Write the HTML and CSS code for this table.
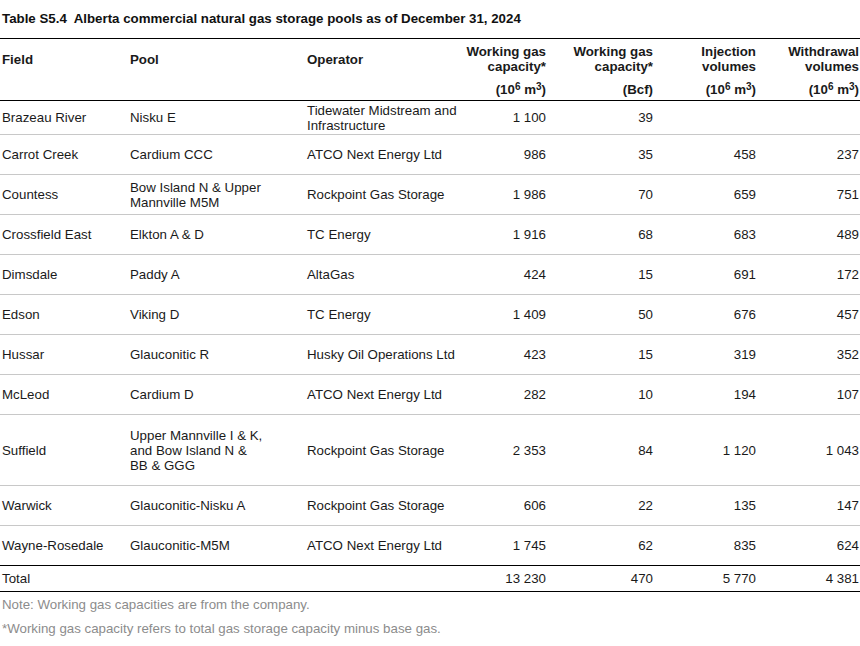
FILE: index.html
```html
<!DOCTYPE html>
<html>
<head>
<meta charset="utf-8">
<link rel="stylesheet" href="styles.css">
</head>
<body>
<div class="title">Table S5.4&nbsp; Alberta commercial natural gas storage pools as of December 31, 2024</div>
<table class="data">
  <colgroup>
    <col class="c-field"><col class="c-pool"><col class="c-op"><col class="c-cap"><col class="c-bcf"><col class="c-inj"><col class="c-wd">
  </colgroup>
  <thead>
    <tr class="h1">
      <th>Field</th><th>Pool</th><th>Operator</th>
      <th class="num">Working gas<br>capacity*</th>
      <th class="num">Working gas<br>capacity*</th>
      <th class="num">Injection<br>volumes</th>
      <th class="num">Withdrawal<br>volumes</th>
    </tr>
    <tr class="h2">
      <th></th><th></th><th></th>
      <th class="num">(10<sup>6</sup> m<sup>3</sup>)</th>
      <th class="num">(Bcf)</th>
      <th class="num">(10<sup>6</sup> m<sup>3</sup>)</th>
      <th class="num">(10<sup>6</sup> m<sup>3</sup>)</th>
    </tr>
  </thead>
  <tbody>
    <tr class="r-first"><td>Brazeau River</td><td>Nisku E</td><td>Tidewater Midstream and Infrastructure</td><td class="num">1 100</td><td class="num">39</td><td class="num"></td><td class="num"></td></tr>
    <tr><td>Carrot Creek</td><td>Cardium CCC</td><td>ATCO Next Energy Ltd</td><td class="num">986</td><td class="num">35</td><td class="num">458</td><td class="num">237</td></tr>
    <tr><td>Countess</td><td>Bow Island N &amp; Upper Mannville M5M</td><td>Rockpoint Gas Storage</td><td class="num">1 986</td><td class="num">70</td><td class="num">659</td><td class="num">751</td></tr>
    <tr><td>Crossfield East</td><td>Elkton A &amp; D</td><td>TC Energy</td><td class="num">1 916</td><td class="num">68</td><td class="num">683</td><td class="num">489</td></tr>
    <tr><td>Dimsdale</td><td>Paddy A</td><td>AltaGas</td><td class="num">424</td><td class="num">15</td><td class="num">691</td><td class="num">172</td></tr>
    <tr><td>Edson</td><td>Viking D</td><td>TC Energy</td><td class="num">1 409</td><td class="num">50</td><td class="num">676</td><td class="num">457</td></tr>
    <tr><td>Hussar</td><td>Glauconitic R</td><td>Husky Oil Operations Ltd</td><td class="num">423</td><td class="num">15</td><td class="num">319</td><td class="num">352</td></tr>
    <tr><td>McLeod</td><td>Cardium D</td><td>ATCO Next Energy Ltd</td><td class="num">282</td><td class="num">10</td><td class="num">194</td><td class="num">107</td></tr>
    <tr class="r-tall"><td>Suffield</td><td>Upper Mannville I &amp; K,<br>and Bow Island N &amp;<br>BB &amp; GGG</td><td>Rockpoint Gas Storage</td><td class="num">2 353</td><td class="num">84</td><td class="num">1 120</td><td class="num">1 043</td></tr>
    <tr><td>Warwick</td><td>Glauconitic-Nisku A</td><td>Rockpoint Gas Storage</td><td class="num">606</td><td class="num">22</td><td class="num">135</td><td class="num">147</td></tr>
    <tr class="r-last"><td>Wayne-Rosedale</td><td>Glauconitic-M5M</td><td>ATCO Next Energy Ltd</td><td class="num">1 745</td><td class="num">62</td><td class="num">835</td><td class="num">624</td></tr>
  </tbody>
  <tfoot>
    <tr class="total"><td>Total</td><td></td><td></td><td class="num">13 230</td><td class="num">470</td><td class="num">5 770</td><td class="num">4 381</td></tr>
  </tfoot>
</table>
<div class="notes">
  <p>Note: Working gas capacities are from the company.</p>
  <p>*Working gas capacity refers to total gas storage capacity minus base gas.</p>
</div>
</body>
</html>
```

FILE: styles.css
```css
html, body {
  margin: 0;
  padding: 0;
  background: #fff;
}
body {
  font-family: "Liberation Sans", Arial, sans-serif;
  font-size: 13.3px;
  line-height: 15px;
  color: #1a1a1a;
}
.title {
  font-weight: bold;
  height: 38px;
  box-sizing: border-box;
  padding: 11px 0 0 2px;
  color: #111;
}
.data {
  width: 860px;
  border-collapse: collapse;
  table-layout: fixed;
}
.c-field { width: 128px; }
.c-pool { width: 177px; }
.c-op { width: 158px; }
.c-cap { width: 85px; }
.c-bcf { width: 107px; }
.c-inj { width: 103px; }
.c-wd { width: 102px; }

.data th, .data td {
  padding: 0 0 0 2px;
  text-align: left;
  vertical-align: middle;
}
.data th.num, .data td.num {
  text-align: right;
  padding: 0 2px 0 0;
}
.data td:last-child, .data th:last-child {
  padding-right: 1px;
}
.data thead tr.h1 {
  border-top: 1px solid #000;
  height: 41px;
}
.data thead tr.h2 {
  height: 21px;
  border-bottom: 1px solid #000;
}
.data th {
  font-weight: bold;
  color: #1a1a1a;
}
.data sup {
  font-size: 10px;
  line-height: 0;
  vertical-align: 4px;
}
.data tbody tr {
  height: 40px;
  border-bottom: 1px solid #c8c8c8;
}
.data tbody tr.r-first { height: 34px; }
.data tbody tr.r-tall { height: 71px; }
.data tbody tr.r-last { border-bottom: 1px solid #000; }
.data tfoot tr.total {
  height: 26px;
  border-bottom: 1px solid #000;
}
.notes {
  padding: 5px 0 0 2px;
  color: #8c8c8c;
}
.notes p {
  margin: 0 0 9px 0;
}
```
